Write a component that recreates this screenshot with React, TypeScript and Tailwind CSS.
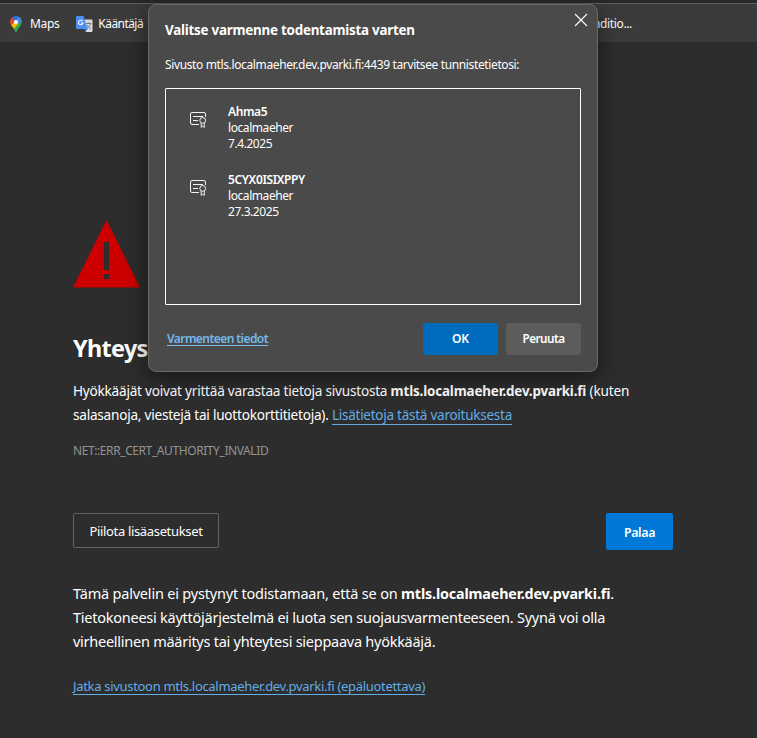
import React from "react";

function MapsIcon() {
  return (
    <svg width="12" height="17" viewBox="0 0 12 17">
      <defs>
        <clipPath id="pin">
          <path d="M6 0.3C2.7 0.3 .3 2.8 .3 6c0 2.6 1.5 3.9 3 5.800C4.300 13.100 4.900 14.400 5.200 15.600c.25 1 1.350 1 1.600 0 .3-1.200.9-2.500 1.900-3.800 1.500-1.900 3-3.200 3-5.800 0-3.200-2.400-5.700-5.700-5.700z" />
        </clipPath>
      </defs>
      <g clipPath="url(#pin)">
        <rect width="12" height="17" fill="#34a853" />
        <path d="M-1 9.500L6 2V-1h-7z" fill="#ea4335" />
        <path d="M4 4.500L8.500-1H13v4.500L8 8z" fill="#4285f4" />
        <path d="M0 10.500L4.500 5.500 8 8l-5 6z" fill="#fbbc04" />
        <path d="M-1 4l2-2.500L5 5 1 9.500z" fill="#ea4335" />
        <path d="M4-1h5L6.500 3.500 3 3 2 1z" fill="#1a73e8" />
      </g>
      <circle cx="6" cy="6" r="2.100" fill="#fff" />
    </svg>
  );
}

function TranslateIcon() {
  return (
    <svg width="17" height="17" viewBox="0 0 17 17">
      <path d="M7 3.500h8.500a1 1 0 0 1 1 1V15a1 1 0 0 1-1 1H10z" fill="#dcdcdc" />
      <path d="M10 7.500h5.500M12.700 6.300v1.200M14.600 7.500c-.5 2.200-2 4-4 5.200M11.200 9c.8 1.600 2 2.900 3.800 3.800" stroke="#6f7f88" strokeWidth="1" fill="none" />
      <path d="M8 13h3.500L9.500 16z" fill="#3a6fd0" />
      <path d="M1 0h6.600l4 13H1a1 1 0 0 1-1-1V1a1 1 0 0 1 1-1z" fill="#4e8df5" />
      <path d="M6.600 5.100A2.300 2.300 0 1 0 7 7H4.900" stroke="#fff" strokeWidth="1.100" fill="none" />
    </svg>
  );
}

function CertificateIcon() {
  return (
    <svg width="17" height="16" viewBox="0 0 17 16" fill="none" stroke="#f2f2f2" strokeWidth="1">
      <path d="M9 12.500H2A1.500 1.500 0 0 1 .5 11V2A1.500 1.500 0 0 1 2 .500h12A1.500 1.500 0 0 1 15.500 2v3" />
      <path d="M3 4.500h10M3 8.500h5" />
      <circle cx="12.700" cy="8.400" r="2.900" />
      <path d="M11.200 11v4.400l1.500-1.300 1.600 1.300V11" />
    </svg>
  );
}

function WarningIcon() {
  return (
    <svg className="block" width="67" height="68" viewBox="0 0 67 68">
      <path d="M33.500 0L67 67.500H0z" fill="#cc0000" />
      <path d="M31 22h5v28h-5zM31 54h5v5h-5z" fill="#2d2d2d" />
    </svg>
  );
}

const certificates = [
  { name: "Ahma5", issuer: "localmaeher", date: "7.4.2025" },
  { name: "5CYX0ISIXPPY", issuer: "localmaeher", date: "27.3.2025" },
];

function CertificateDialog() {
  return (
    <div className="absolute left-[148px] top-[4px] flex h-[368px] w-[450px] flex-col rounded-lg border border-[#686868] bg-[#4a4a4a] px-4 shadow-[0_6px_24px_rgba(0,0,0,0.5)]">
      <div className="flex h-[51px] items-start justify-between">
        <h2 className="pt-[16px] text-[13.4px] leading-[18px] font-bold tracking-[-0.24px] whitespace-nowrap">
          Valitse varmenne todentamista varten
        </h2>
        <svg className="mt-[8px] mr-[-7px]" width="14" height="14" viewBox="0 0 14 14" stroke="#fff" strokeWidth="1.100">
          <path d="M1 1l12 12M13 1l-12 12" />
        </svg>
      </div>
      <p className="h-[32px] text-[12px] leading-[18px] tracking-[-0.37px] whitespace-nowrap">
        Sivusto mtls.localmaeher.dev.pvarki.fi:4439 tarvitsee tunnistetietosi:
      </p>
      <div className="h-[217px] w-[416px] rounded-[1px] border border-white pt-[15px] pl-6">
        {certificates.map((c) => (
          <div key={c.name} className="flex h-[68px] gap-[21px]">
            <div className="pt-[8px]">
              <CertificateIcon />
            </div>
            <div className="text-[12px] leading-4 tracking-[-0.43px]">
              <div className="font-semibold tracking-[-0.38px]">{c.name}</div>
              <div>{c.issuer}</div>
              <div>{c.date}</div>
            </div>
          </div>
        ))}
      </div>
      <div className="mt-[18px] flex items-center">
        <a className="ml-[2px] border-b border-[#76b9ed] text-[12px] leading-[13px] font-semibold tracking-[-0.56px] whitespace-nowrap text-[#76b9ed]">
          Varmenteen tiedot
        </a>
        <button className="ml-auto h-8 w-[75px] rounded-[3px] bg-[#006cbe] text-[12px] font-semibold tracking-[-0.1px]">OK</button>
        <button className="ml-2 h-8 w-[75px] rounded-[3px] bg-[#5c5c5c] text-[11.7px] font-semibold tracking-[-0.5px]">
          Peruuta
        </button>
      </div>
    </div>
  );
}

export default function App() {
  return (
    <div className="relative h-[738px] w-[757px] overflow-hidden bg-[#2d2d2d] font-['Noto_Sans','Open_Sans',sans-serif] text-white">
      <div className="h-[3px] bg-[#292929]" />
      <div className="flex h-[39px] items-center border-t border-[#606060] bg-[#3b3b3b] pt-[2px] pl-[10px] text-[12px] tracking-[-0.35px]">
        <MapsIcon />
        <span className="ml-2">Maps</span>
        <span className="ml-[17px]">
          <TranslateIcon />
        </span>
        <span className="ml-[5px] tracking-[-0.56px]">Kääntäjä</span>
        <span className="mr-[125px] ml-auto">Conditio...</span>
      </div>
      <main className="pt-[178px] pl-[73px]">
        <WarningIcon />
        <h1 className="mt-[44px] text-[23.4px] leading-[32px] font-bold tracking-[-0.65px]">Yhteys</h1>
        <div className="mt-[15px] text-[13.6px] leading-6 whitespace-nowrap">
          <p className="h-6">
            <span className="tracking-[-0.23px]">Hyökkääjät voivat yrittää varastaa tietoja sivustosta </span>
            <b className="text-[13.4px] tracking-[-0.15px]">mtls.localmaeher.dev.pvarki.fi</b>
            <span className="tracking-[-0.2px]"> (kuten</span>
          </p>
          <p className="h-6">
            <span className="tracking-[-0.235px]">salasanoja, viestejä tai luottokorttitietoja). </span>
            <a className="inline-block border-b border-[#63ace5] text-[13.5px] leading-[18px] tracking-[-0.25px] text-[#63ace5]">
              Lisätietoja tästä varoituksesta
            </a>
          </p>
        </div>
        <p className="mt-3 text-[12px] leading-6 tracking-[-0.41px] text-[#949494]">NET::ERR_CERT_AUTHORITY_INVALID</p>
        <div className="mt-[50px] flex w-[600px] items-start justify-between">
          <button className="h-[35px] w-[146px] rounded-[2px] border border-[#626262] pt-[3px] text-[13px] tracking-[-0.34px]">
            Piilota lisäasetukset
          </button>
          <button className="h-[37px] w-[67px] rounded-[2px] bg-[#0078d7] pt-[3px] text-[12.4px] font-semibold tracking-[-0.36px]">
            Palaa
          </button>
        </div>
        <div className="mt-[31px] text-[14.5px] leading-6 whitespace-nowrap">
          <p className="h-6">
            <span className="tracking-[-0.2px]">Tämä palvelin ei pystynyt todistamaan, että se on </span>
            <b className="text-[14.3px] tracking-[-0.15px]">mtls.localmaeher.dev.pvarki.fi</b>.
          </p>
          <p className="h-6 tracking-[-0.25px]">
            Tietokoneesi käyttöjärjestelmä ei luota sen suojausvarmenteeseen. Syynä voi olla
          </p>
          <p className="h-6 tracking-[-0.26px]">virheellinen määritys tai yhteytesi sieppaava hyökkääjä.</p>
        </div>
        <a className="mt-[25px] inline-block border-b border-[#63ace5] text-[13px] leading-[16px] tracking-[-0.31px] whitespace-nowrap text-[#63ace5]">
          Jatka sivustoon mtls.localmaeher.dev.pvarki.fi (epäluotettava)
        </a>
      </main>
      <CertificateDialog />
    </div>
  );
}
